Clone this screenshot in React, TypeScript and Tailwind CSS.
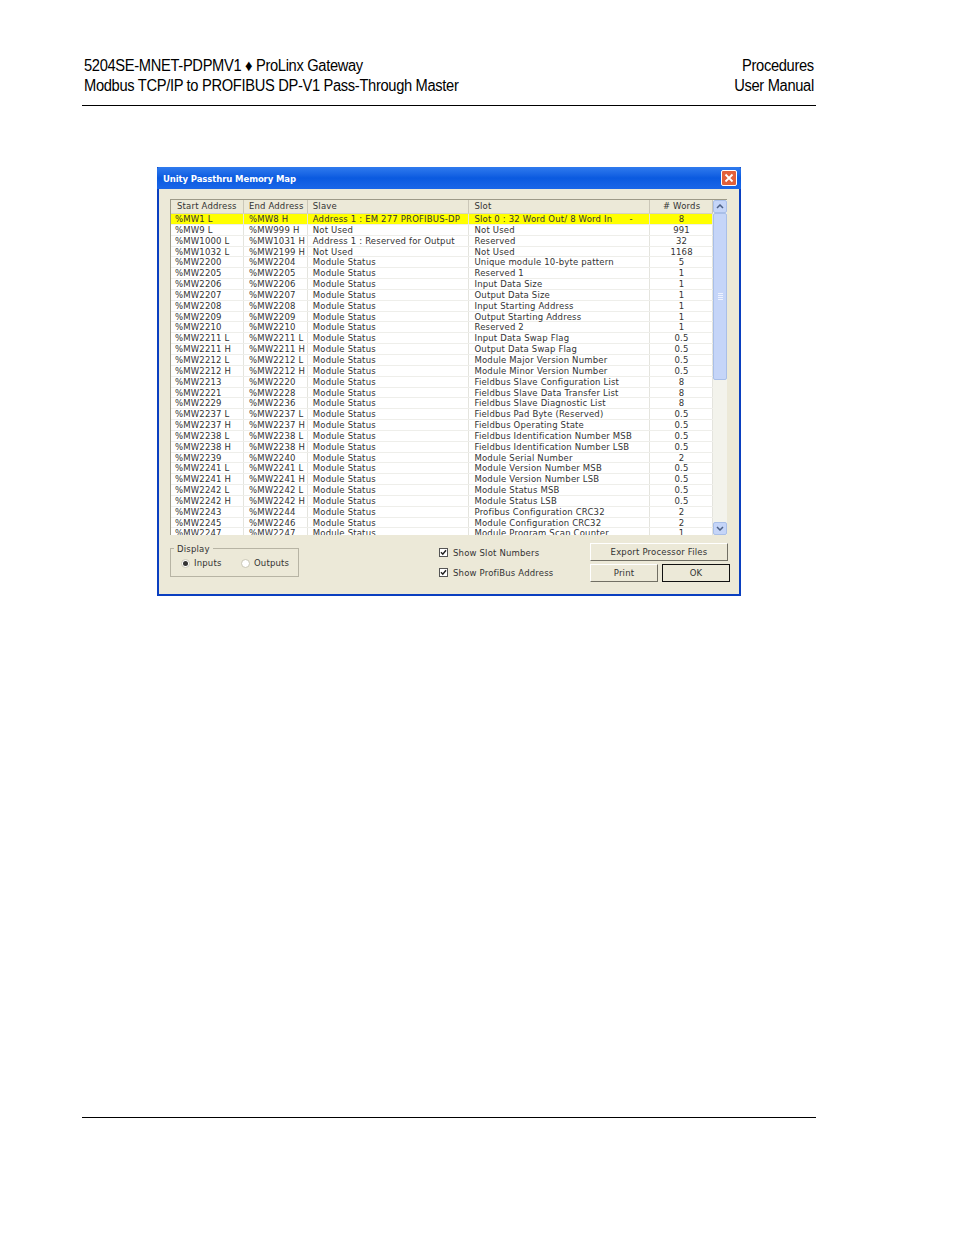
const rows = [
  ['%MW1 L', '%MW8 H', 'Address 1 : EM 277 PROFIBUS-DP', 'Slot 0 : 32 Word Out/ 8 Word In      -', '8'],
  ['%MW9 L', '%MW999 H', 'Not Used', 'Not Used', '991'],
  ['%MW1000 L', '%MW1031 H', 'Address 1 : Reserved for Output', 'Reserved', '32'],
  ['%MW1032 L', '%MW2199 H', 'Not Used', 'Not Used', '1168'],
  ['%MW2200', '%MW2204', 'Module Status', 'Unique module 10-byte pattern', '5'],
  ['%MW2205', '%MW2205', 'Module Status', 'Reserved 1', '1'],
  ['%MW2206', '%MW2206', 'Module Status', 'Input Data Size', '1'],
  ['%MW2207', '%MW2207', 'Module Status', 'Output Data Size', '1'],
  ['%MW2208', '%MW2208', 'Module Status', 'Input Starting Address', '1'],
  ['%MW2209', '%MW2209', 'Module Status', 'Output Starting Address', '1'],
  ['%MW2210', '%MW2210', 'Module Status', 'Reserved 2', '1'],
  ['%MW2211 L', '%MW2211 L', 'Module Status', 'Input Data Swap Flag', '0.5'],
  ['%MW2211 H', '%MW2211 H', 'Module Status', 'Output Data Swap Flag', '0.5'],
  ['%MW2212 L', '%MW2212 L', 'Module Status', 'Module Major Version Number', '0.5'],
  ['%MW2212 H', '%MW2212 H', 'Module Status', 'Module Minor Version Number', '0.5'],
  ['%MW2213', '%MW2220', 'Module Status', 'Fieldbus Slave Configuration List', '8'],
  ['%MW2221', '%MW2228', 'Module Status', 'Fieldbus Slave Data Transfer List', '8'],
  ['%MW2229', '%MW2236', 'Module Status', 'Fieldbus Slave Diagnostic List', '8'],
  ['%MW2237 L', '%MW2237 L', 'Module Status', 'Fieldbus Pad Byte (Reserved)', '0.5'],
  ['%MW2237 H', '%MW2237 H', 'Module Status', 'Fieldbus Operating State', '0.5'],
  ['%MW2238 L', '%MW2238 L', 'Module Status', 'Fieldbus Identification Number MSB', '0.5'],
  ['%MW2238 H', '%MW2238 H', 'Module Status', 'Fieldbus Identification Number LSB', '0.5'],
  ['%MW2239', '%MW2240', 'Module Status', 'Module Serial Number', '2'],
  ['%MW2241 L', '%MW2241 L', 'Module Status', 'Module Version Number MSB', '0.5'],
  ['%MW2241 H', '%MW2241 H', 'Module Status', 'Module Version Number LSB', '0.5'],
  ['%MW2242 L', '%MW2242 L', 'Module Status', 'Module Status MSB', '0.5'],
  ['%MW2242 H', '%MW2242 H', 'Module Status', 'Module Status LSB', '0.5'],
  ['%MW2243', '%MW2244', 'Module Status', 'Profibus Configuration CRC32', '2'],
  ['%MW2245', '%MW2246', 'Module Status', 'Module Configuration CRC32', '2'],
  ['%MW2247', '%MW2247', 'Module Status', 'Module Program Scan Counter', '1'],
]

const cols = ['w-[73px]', 'w-[64px]', 'w-[162px]', 'w-[181px]', 'w-[63px]']

function Check() {
  return (
    <span className="flex h-[9px] w-[9px] items-center justify-center border border-[#555] bg-white">
      <svg viewBox="0 0 7 7" className="h-[7px] w-[7px]">
        <path d="M1 3.2 L2.8 5.2 L6 1.2" fill="none" stroke="#222" strokeWidth="1.5" />
      </svg>
    </span>
  )
}

function Radio({ on }: { on?: boolean }) {
  return (
    <span className="flex h-[9px] w-[9px] shrink-0 items-center justify-center rounded-full border border-[#c9c6b4] bg-white">
      {on && <span className="h-[5px] w-[5px] rounded-full bg-[#333]" />}
    </span>
  )
}

function Btn({ label, className }: { label: string; className: string }) {
  return (
    <div className={'flex h-[18px] items-center justify-center border bg-[#ece9d8] text-[#333] ' + className}>
      {label}
    </div>
  )
}

export default function App() {
  return (
    <div className="h-[1235px] w-[954px] bg-white font-['Liberation_Sans',sans-serif] text-black">
      <div className="mx-[82px] flex h-[106px] w-[734px] items-start justify-between border-b border-black pt-[56px] pl-[2px] pr-[2px] text-[16px] leading-[20px] tracking-[-0.35px]">
        <div className="origin-left scale-x-[0.917] whitespace-nowrap">
          <div>5204SE-MNET-PDPMV1 ♦ ProLinx Gateway</div>
          <div>Modbus TCP/IP to PROFIBUS DP-V1 Pass-Through Master</div>
        </div>
        <div className="origin-right scale-x-[0.917] text-right">
          <div>Procedures</div>
          <div>User Manual</div>
        </div>
      </div>

      <div className="mt-[61px] ml-[157px] flex h-[429px] w-[584px] flex-col border-x-[2px] border-b-[2px] border-[#0a3fc0] bg-[#ece9d8] font-['DejaVu_Sans',sans-serif] text-[8.5px] tracking-[0.18px] text-[#333]">
        <div className="-mx-[2px] flex h-[22px] shrink-0 items-center justify-between rounded-t-[2px] bg-gradient-to-b from-[#2f7bee] via-[#0a5ae0] to-[#1a66e8] pl-[6px] pr-[4px] text-white">
          <span className="mt-[3px] text-[8.5px] font-bold tracking-[-0.1px]">Unity Passthru Memory Map</span>
          <span className="flex h-[16px] w-[16px] items-center justify-center rounded-[2px] border border-white bg-[#e2603a]">
            <svg viewBox="0 0 10 10" className="h-[10px] w-[10px]">
              <path d="M1.5 1.5 L8.5 8.5 M8.5 1.5 L1.5 8.5" stroke="white" strokeWidth="1.8" />
            </svg>
          </span>
        </div>

        <div className="mt-[10px] ml-[11px] flex h-[336px] w-[557px] border-t border-l border-[#9d9a88] bg-white">
          <div className="flex min-w-0 flex-1 flex-col overflow-hidden">
            <div className="flex h-[14px] shrink-0 items-start border-b border-[#d6d3c2] bg-[#ece9d8]">
              {['Start Address', 'End Address', 'Slave', 'Slot', '# Words'].map((h, i) => (
                <div key={h} className={cols[i] + ' h-full border-r border-[#cbc7b8] leading-[13px] ' + (i === 4 ? 'pl-[1px] text-center' : i === 0 ? 'pl-[6px]' : 'pl-[5px]')}>
                  {h}
                </div>
              ))}
            </div>
            {rows.map((r, n) => (
              <div key={n} className={'flex h-[10.85px] shrink-0 border-b border-[#eeeeea] leading-[10px] ' + (n === 0 ? 'bg-[#ffff00]' : '')}>
                {r.map((c, i) => (
                  <div key={i} className={cols[i] + ' whitespace-pre border-r border-[#e4e4de] ' + (i === 4 ? 'pl-[1px] text-center' : i === 0 ? 'pl-[4px]' : 'pl-[5px]')}>
                    {c}
                  </div>
                ))}
              </div>
            ))}
          </div>
          <div className="flex w-[14px] shrink-0 flex-col bg-[#f3f3ec]">
            <div className="flex h-[13px] items-center justify-center rounded-[2px] border border-[#a9bfe8] bg-[#c5d5f8]">
              <svg viewBox="0 0 8 5" className="h-[5px] w-[8px]"><path d="M1 4 L4 1 L7 4" fill="none" stroke="#4d6185" strokeWidth="1.5" /></svg>
            </div>
            <div className="flex h-[167px] flex-col items-center justify-center gap-[1px] rounded-[2px] border border-[#a9bfe8] bg-[#c5d5f8]">
              <span className="h-[1px] w-[5px] bg-[#eef2fe]" />
              <span className="h-[1px] w-[5px] bg-[#eef2fe]" />
              <span className="h-[1px] w-[5px] bg-[#eef2fe]" />
              <span className="h-[1px] w-[5px] bg-[#eef2fe]" />
            </div>
            <div className="flex-1" />
            <div className="flex h-[13px] items-center justify-center rounded-[2px] border border-[#a9bfe8] bg-[#c5d5f8]">
              <svg viewBox="0 0 8 5" className="h-[5px] w-[8px]"><path d="M1 1 L4 4 L7 1" fill="none" stroke="#4d6185" strokeWidth="1.5" /></svg>
            </div>
          </div>
        </div>

        <div className="mt-[13px] ml-[11px] flex items-start">
          <div className="relative h-[29px] w-[129px] shrink-0 border border-[#b7b4a4] pt-[8px] pl-[10px]">
            <span className="absolute -top-[5px] left-[3px] bg-[#ece9d8] px-[3px] leading-[10px]">Display</span>
            <div className="flex items-center">
              <Radio on />
              <span className="ml-[4px] w-[47px]">Inputs</span>
              <Radio />
              <span className="ml-[4px]">Outputs</span>
            </div>
          </div>
          <div className="ml-[140px] flex w-[151px] shrink-0 flex-col gap-[11px]">
            <div className="flex h-[9px] items-center gap-[5px]"><Check /><span className="mt-[2px]">Show Slot Numbers</span></div>
            <div className="flex h-[9px] items-center gap-[5px]"><Check /><span className="mt-[2px]">Show ProfiBus Address</span></div>
          </div>
          <div className="-mt-[5px] flex w-[140px] shrink-0 flex-col gap-[3px]">
            <Btn label="Export Processor Files" className="w-[138px] border-white border-r-[#716f64] border-b-[#716f64]" />
            <div className="flex gap-[4px]">
              <Btn label="Print" className="w-[68px] border-white border-r-[#716f64] border-b-[#716f64]" />
              <Btn label="OK" className="w-[68px] border-[#111]" />
            </div>
          </div>
        </div>
      </div>

      <div className="mx-[82px] mt-[521px] w-[734px] border-b border-black" />
    </div>
  )
}
